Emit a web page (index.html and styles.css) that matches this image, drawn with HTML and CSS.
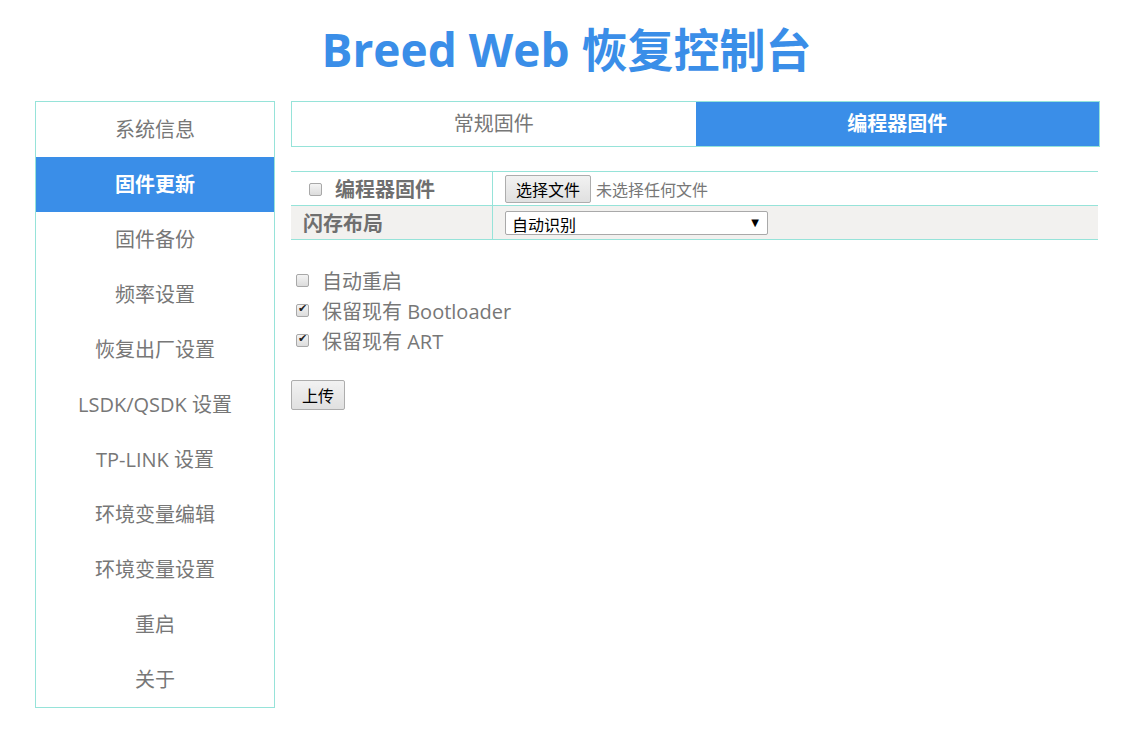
FILE: index.html
```html
<!DOCTYPE html>
<html lang="zh-CN">
<head>
<meta charset="utf-8">
<title>Breed Web 恢复控制台</title>
<link rel="stylesheet" href="styles.css">
</head>
<body>
<h1 class="title">Breed Web 恢复控制台</h1>
<div class="layout">
  <ul class="menu">
    <li>系统信息</li>
    <li class="active">固件更新</li>
    <li>固件备份</li>
    <li>频率设置</li>
    <li>恢复出厂设置</li>
    <li>LSDK/QSDK 设置</li>
    <li>TP-LINK 设置</li>
    <li>环境变量编辑</li>
    <li>环境变量设置</li>
    <li>重启</li>
    <li>关于</li>
  </ul>
  <div class="main">
    <div class="tabs">
      <div class="tab">常规固件</div>
      <div class="tab on">编程器固件</div>
    </div>
    <table class="form">
      <tr>
        <td class="lbl"><input type="checkbox" class="cb cb-row"><span>编程器固件</span></td>
        <td class="val"><button class="btn">选择文件</button><span class="nofile">未选择任何文件</span></td>
      </tr>
      <tr class="alt">
        <td class="lbl">闪存布局</td>
        <td class="val"><div class="select"><span class="sel-text">自动识别</span><span class="arrow">▼</span></div></td>
      </tr>
    </table>
    <div class="opts">
      <label class="opt"><input type="checkbox" class="cb"><span>自动重启</span></label>
      <label class="opt"><input type="checkbox" class="cb" checked><span>保留现有 Bootloader</span></label>
      <label class="opt"><input type="checkbox" class="cb" checked><span>保留现有 ART</span></label>
    </div>
    <button class="btn upload">上传</button>
  </div>
</div>
</body>
</html>
```
FILE: styles.css
```css
html, body {
  margin: 0;
  padding: 0;
  background: #fff;
}
body {
  font-family: "Open Sans", "Noto Sans CJK SC", sans-serif;
  color: #777;
}
.title {
  margin: 0;
  padding-top: 18px;
  height: 83px;
  box-sizing: border-box;
  text-align: center;
  font-size: 46px;
  line-height: 62px;
  font-weight: 700;
  color: #3a8ee8;
  padding-left: 6px;
}
.layout {
  display: flex;
  gap: 16px;
  padding: 18px 27px 0 35px;
  align-items: flex-start;
}
.menu {
  list-style: none;
  margin: 0;
  padding: 0;
  width: 238px;
  border: 1px solid #96e3d9;
  flex: none;
}
.menu li {
  height: 55px;
  line-height: 55px;
  text-align: center;
  font-size: 20px;
  color: #777;
}
.menu li.active {
  background: #3a8ee8;
  color: #fff;
  font-weight: 700;
}
.main {
  flex: 1;
  min-width: 0;
}
.tabs {
  display: flex;
  border: 1px solid #96e3d9;
  height: 44px;
}
.tab {
  flex: 1;
  text-align: center;
  line-height: 44px;
  font-size: 20px;
  color: #777;
}
.tab.on {
  background: #3a8ee8;
  color: #fff;
  font-weight: 700;
}
.form {
  margin-top: 24px;
  width: 807px;
  border-collapse: collapse;
}
.form td {
  border-top: 1px solid #96e3d9;
  border-bottom: 1px solid #96e3d9;
  height: 33px;
  padding: 0;
}
.form .lbl {
  width: 189px;
  padding-left: 12px;
  border-right: 1px solid #96e3d9;
  font-size: 20px;
  font-weight: 700;
  color: #6f6f6f;
}
.form .val {
  padding-left: 12px;
  font-size: 16px;
}
.form tr.alt td {
  background: #f2f1ef;
}
.lbl span {
  vertical-align: middle;
}
.cb {
  appearance: none;
  -webkit-appearance: none;
  width: 13px;
  height: 13px;
  margin: 0 6px 0 0;
  border: 1px solid #a8a8a8;
  border-radius: 2px;
  background: linear-gradient(#f4f4f4, #dcdcdc);
  vertical-align: middle;
  position: relative;
  box-sizing: border-box;
}
.cb:checked::after {
  content: "✔";
  position: absolute;
  left: 1px;
  top: -3px;
  font-size: 11px;
  color: #222;
  font-family: "DejaVu Sans", sans-serif;
}
.cb-row {
  margin-left: 6px;
  margin-right: 13px;
}
.btn {
  font-family: "Noto Sans CJK SC", sans-serif;
  font-size: 16px;
  color: #000;
  background: linear-gradient(#f2f2f2, #e0e0e0);
  border: 1px solid #adadad;
  border-radius: 2px;
  height: 28px;
  padding: 0 10px;
  line-height: 26px;
  vertical-align: middle;
}
.nofile {
  margin-left: 5px;
  color: #777;
  vertical-align: middle;
  font-family: "Noto Sans CJK SC", sans-serif;
}
.select {
  display: flex;
  justify-content: space-between;
  align-items: center;
  width: 263px;
  height: 24px;
  box-sizing: border-box;
  border: 1px solid #a9a9a9;
  border-radius: 2px;
  background: #fff;
  padding: 0 8px 0 6px;
  color: #000;
  font-family: "Noto Sans CJK SC", sans-serif;
  font-size: 16px;
  line-height: 20px;
}
.sel-text {
  margin-top: 3px;
}
.arrow {
  font-size: 10px;
  color: #000;
  font-family: "DejaVu Sans", sans-serif;
}
.opts {
  margin-top: 25px;
  display: flex;
  flex-direction: column;
  padding-left: 5px;
}
.opt {
  display: flex;
  align-items: center;
  height: 30px;
  font-size: 20px;
  color: #777;
}
.opt .cb {
  margin-right: 13px;
}
.upload {
  margin-top: 25px;
  height: 30px;
  padding: 0 10px;
}
```
